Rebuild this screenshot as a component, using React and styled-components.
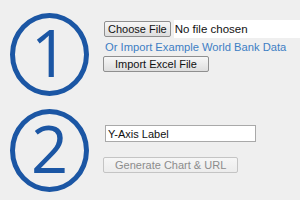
import React from "react";
import styled, { createGlobalStyle } from "styled-components";

const Global = createGlobalStyle`
  html, body {
    margin: 0;
    background: #efefef;
  }
  body {
    font-family: "Liberation Sans", Arial, sans-serif;
    font-size: 11px;
    color: #111;
  }
`;

const Page = styled.div`
  display: flex;
  flex-direction: column;
  gap: 13px;
  padding: 13px 0 0 10px;
  width: 290px;
  height: 187px;
  overflow: hidden;
`;

const Step = styled.div`
  display: flex;
  align-items: flex-start;
  gap: 14px;
`;

const Circle = styled.div`
  width: 69px;
  height: 69px;
  flex: none;
  border: 5px solid #1b56a4;
  border-radius: 50%;
  display: flex;
  align-items: center;
  justify-content: center;
  color: #1b56a4;
  font-family: "Open Sans", "Liberation Sans", sans-serif;
  font-weight: 400;
  font-size: 65px;
  line-height: 1;
  padding-bottom: ${(p) => p.$lift || 0}px;
  box-sizing: content-box;
`;

const Controls = styled.div`
  display: flex;
  flex-direction: column;
  align-items: flex-start;
  flex: 1;
  padding-top: ${(p) => p.$top}px;
`;

const FileRow = styled.div`
  display: flex;
  align-items: center;
  align-self: stretch;
  height: 18px;
  background: linear-gradient(to right, transparent 71px, #fff 71px);
`;

const FileName = styled.span`
  padding-left: 4px;
  font-size: 11.5px;
  color: #111;
`;

const Button = styled.button`
  font-family: "Liberation Sans", Arial, sans-serif;
  font-size: 11px;
  height: ${(p) => p.$h || 16}px;
  padding: 0 ${(p) => p.$px || 11}px;
  margin: ${(p) => p.$mt || 0}px 0 0 ${(p) => p.$ml || 0}px;
  border-radius: 2px;
  border: 1px solid ${(p) => (p.disabled ? "#c4c4c4" : "#8f8f8f")};
  background: ${(p) =>
    p.disabled
      ? "linear-gradient(#f6f6f6, #ececec)"
      : "linear-gradient(#f7f7f7, #dedede)"};
  color: ${(p) => (p.disabled ? "#8c8c8c" : "#111")};
  line-height: 1;
  cursor: default;
`;

const Link = styled.a`
  display: block;
  margin: 3px 0 0 2px;
  color: #3d7ec4;
  font-size: 11.2px;
  line-height: 12px;
  text-decoration: none;
`;

const TextInput = styled.input`
  box-sizing: border-box;
  width: 151px;
  height: 17px;
  margin-left: 2px;
  padding: 0 2px;
  border: 1px solid #a9a9a9;
  background: #fff;
  font-family: "Liberation Sans", Arial, sans-serif;
  font-size: 11px;
  color: #111;
  outline: none;
`;

export default function App() {
  return (
    <>
      <Global />
      <Page>
        <Step>
          <Circle $lift={4}>1</Circle>
          <Controls $top={7}>
            <FileRow>
              <Button $ml={1} $px={3}>Choose File</Button>
              <FileName>No file chosen</FileName>
            </FileRow>
            <Link href="#">Or Import Example World Bank Data</Link>
            <Button $mt={3}>Import Excel File</Button>
          </Controls>
        </Step>
        <Step>
          <Circle $lift={4}>2</Circle>
          <Controls $top={16}>
            <TextInput defaultValue="Y-Axis Label" />
            <Button $mt={15} disabled>
              Generate Chart &amp; URL
            </Button>
          </Controls>
        </Step>
      </Page>
    </>
  );
}
